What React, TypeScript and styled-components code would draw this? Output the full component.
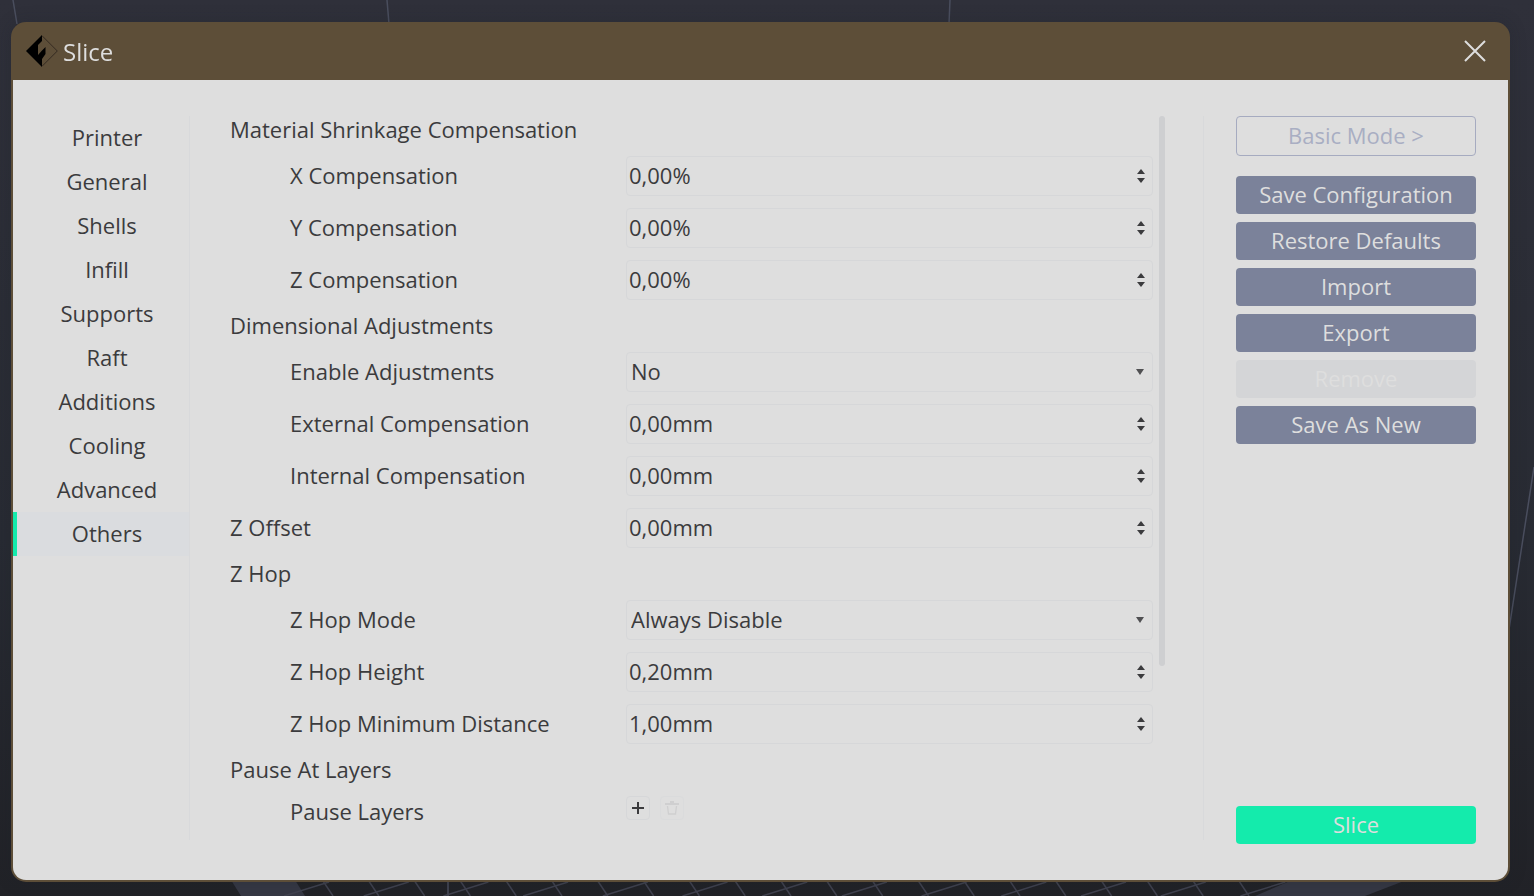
import React from 'react';
import styled, { createGlobalStyle, css } from 'styled-components';

const GlobalStyle = createGlobalStyle`
  *, *::before, *::after { box-sizing: border-box; }
  body {
    margin: 0;
    background: #24262d;
    color: #3b3b3d;
    font-family: 'Open Sans', 'Noto Sans', sans-serif;
    font-size: 22px;
    line-height: 26px;
  }
  button, input, select { font: inherit; color: inherit; }
`;

const Viewport = styled.div`
  min-height: 100vh;
  display: flex;
  padding: 22px 24px 14px 11px;
  background: linear-gradient(#2f303a, #282b33 60%, #212227);
`;

const Plate = styled.svg`
  position: fixed;
  inset: 0;
  width: 100%;
  height: 100%;
`;

const Dialog = styled.main`
  position: relative;
  flex: 1;
  min-width: 0;
  display: flex;
  flex-direction: column;
  padding: 0 2px 2px;
  border-radius: 15px;
  background: #5d4e38;
  box-shadow: 0 0 16px #1c1e2640;
`;

const TitleBar = styled.header`
  height: 58px;
  flex: none;
  display: flex;
  align-items: center;
  gap: 5px;
  padding: 0 20px 0 13px;
  color: #dedede;
`;

const Title = styled.h1`
  flex: 1;
  margin: 0;
  padding-top: 2px;
  font-size: 24px;
  font-weight: 400;
`;

const CloseButton = styled.button`
  display: flex;
  padding: 0;
  border: 0;
  background: none;
`;

const Body = styled.div`
  flex: 1;
  display: flex;
  padding: 36px 32px 40px 0;
  border-radius: 0 0 13px 13px;
  background: #dedede;
`;

const Nav = styled.nav`
  width: 177px;
  flex: none;
  display: flex;
  flex-direction: column;
  border-right: 1px solid #d8d9db;
`;

const NavLink = styled.a<{ $active: boolean }>`
  height: 44px;
  display: flex;
  align-items: center;
  justify-content: center;
  padding: 0 0 2px 8px;
  border-left: 4px solid transparent;
  color: inherit;
  text-decoration: none;
  ${({ $active }) => $active && css`
    border-left-color: #14ebac;
    background: #dadcdf;
  `}
`;

const Settings = styled.form`
  flex: 1;
  min-width: 0;
  display: flex;
  flex-direction: column;
  gap: 12px;
  padding-left: 40px;
`;

const GroupTitle = styled.h2`
  margin: 0;
  padding-bottom: 2px;
  font-size: inherit;
  font-weight: 400;
`;

const Row = styled.div`
  display: flex;
  align-items: center;
`;

const RowLabel = styled.label<{ $nested?: boolean }>`
  width: 396px;
  flex: none;
  padding-bottom: 2px;
  padding-left: ${({ $nested }) => ($nested ? 60 : 0)}px;
`;

const Field = styled.div`
  flex: 1;
  min-width: 0;
  height: 40px;
  display: grid;
  grid-template-columns: 1fr 22px;
  align-items: center;
  border: 1px solid #d6d7d9;
  border-radius: 4px;
`;

const ValueInput = styled.input`
  min-width: 0;
  width: 100%;
  padding: 0 2px 2px;
  border: 0;
  background: none;
  outline: none;
`;

const Stepper = styled.div`
  display: flex;
  flex-direction: column;
  align-items: center;
  gap: 4px;
`;

const StepButton = styled.button`
  display: flex;
  padding: 0;
  border: 0;
  background: none;
`;

const ValueSelect = styled.select`
  grid-area: 1 / 1 / 2 / 3;
  width: 100%;
  height: 100%;
  padding: 0 4px 2px;
  border: 0;
  background: none;
  line-height: 32px;
  appearance: none;
  outline: none;
`;

const SelectArrow = styled.svg`
  grid-area: 1 / 2 / 2 / 3;
  margin-left: 6px;
  pointer-events: none;
`;

const LayerRow = styled(Row)`
  height: 32px;
`;

const LayerTools = styled.div`
  align-self: flex-start;
  display: flex;
  gap: 10px;
`;

const ToolButton = styled.button`
  width: 24px;
  height: 24px;
  display: flex;
  align-items: center;
  justify-content: center;
  padding: 0;
  border: 1px solid #d6d7d9;
  border-radius: 4px;
  background: none;
  &:disabled { color: #cfcfd0; border-color: #dadbdc; }
`;

const ScrollTrack = styled.div`
  width: 51px;
  flex: none;
  padding-left: 6px;
  border-right: 1px solid #d8d9db;
`;

const ScrollThumb = styled.div`
  width: 6px;
  height: 76%;
  border-radius: 3px;
  background: #cecfd1;
`;

const Actions = styled.aside`
  width: 272px;
  flex: none;
  display: flex;
  flex-direction: column;
  gap: 8px;
  padding-left: 32px;
  margin-bottom: -4px;
`;

const ActionButton = styled.button<{ $accent?: boolean }>`
  height: 38px;
  padding: 0 0 2px;
  border: 0;
  border-radius: 4px;
  background: ${({ $accent }) => ($accent ? '#14ebac' : '#7b829a')};
  color: #dedede;
  ${({ $accent }) => $accent && css`margin-top: auto;`}
  &:disabled { background: #d4d5d7; color: #dedede; }
`;

const ModeButton = styled(ActionButton)`
  height: 40px;
  margin-bottom: 12px;
  border: 1px solid #a6abc0;
  background: none;
  color: #a9aec3;
`;

const pages = ['Printer', 'General', 'Shells', 'Infill', 'Supports', 'Raft', 'Additions', 'Cooling', 'Advanced', 'Others'];

type RowProps = { label: string; value: string; nested?: boolean };

const toId = (label: string) => label.toLowerCase().replace(/ /g, '-');

function NumberRow({ label, value, nested }: RowProps) {
  const id = toId(label);
  return (
    <Row>
      <RowLabel htmlFor={id} $nested={nested}>{label}</RowLabel>
      <Field>
        <ValueInput id={id} type="text" defaultValue={value} />
        <Stepper>
          <StepButton type="button" aria-label={`Increase ${label}`}>
            <svg width="8" height="5" viewBox="0 0 8 5"><path d="M4 0 8 5H0Z" fill="#3b3b3d" /></svg>
          </StepButton>
          <StepButton type="button" aria-label={`Decrease ${label}`}>
            <svg width="8" height="5" viewBox="0 0 8 5"><path d="M0 0H8L4 5Z" fill="#3b3b3d" /></svg>
          </StepButton>
        </Stepper>
      </Field>
    </Row>
  );
}

function SelectRow({ label, value, nested }: RowProps) {
  const id = toId(label);
  return (
    <Row>
      <RowLabel htmlFor={id} $nested={nested}>{label}</RowLabel>
      <Field>
        <ValueSelect id={id} defaultValue={value}>
          <option>{value}</option>
        </ValueSelect>
        <SelectArrow width="8" height="6" viewBox="0 0 8 6"><path d="M0 0H8L4 6Z" fill="#505052" /></SelectArrow>
      </Field>
    </Row>
  );
}

const gridDown = Array.from({ length: 21 }, (_, i) => 323 + i * 45.8);
const gridUp = Array.from({ length: 13 }, (_, i) => 329 + i * 79.7);

export default function App() {
  return (
    <Viewport>
      <GlobalStyle />
      <Plate viewBox="0 0 1534 896" preserveAspectRatio="none" aria-hidden="true" fill="none" stroke="#40424f" strokeWidth="1.5">
        <path d="M13 0 17 24M387 0 389 24M950 0 949 24M1534 467 1508 636M448 880V896" stroke="#4a4e5e" />
        <path d="M231 880H295L305 896H241Z" fill="#363844" stroke="none" />
        {gridDown.map((x) => <path key={x} d={`M${x} 881 ${x + 10} 896`} />)}
        {gridUp.map((x) => <path key={x} d={`M${x} 882 ${x - 45} 896`} />)}
        <path d="M1290 881H1404L1365 896H1255Z" fill="#363844" stroke="none" />
      </Plate>
      <Dialog>
        <TitleBar>
          <svg width="32" height="32" viewBox="0 0 32 32" aria-hidden="true">
            <path d="M16 .7 31.3 16 16 31.3" fill="none" stroke="#352b22" strokeWidth="1" />
            <path d="M16 0V6L12 10V20L16 15.500 19.500 12V19L16 24V32L0 16Z" fill="#000" />
          </svg>
          <Title>Slice</Title>
          <CloseButton type="button" aria-label="Close">
            <svg width="26" height="26" viewBox="0 0 26 26"><path d="M3 3 23 23M23 3 3 23" stroke="#dedede" strokeWidth="2" /></svg>
          </CloseButton>
        </TitleBar>
        <Body>
          <Nav>
            {pages.map((page) => (
              <NavLink key={page} href={`#${page.toLowerCase()}`} $active={page === 'Others'}>{page}</NavLink>
            ))}
          </Nav>
          <Settings>
            <GroupTitle>Material Shrinkage Compensation</GroupTitle>
            <NumberRow nested label="X Compensation" value="0,00%" />
            <NumberRow nested label="Y Compensation" value="0,00%" />
            <NumberRow nested label="Z Compensation" value="0,00%" />
            <GroupTitle>Dimensional Adjustments</GroupTitle>
            <SelectRow nested label="Enable Adjustments" value="No" />
            <NumberRow nested label="External Compensation" value="0,00mm" />
            <NumberRow nested label="Internal Compensation" value="0,00mm" />
            <NumberRow label="Z Offset" value="0,00mm" />
            <GroupTitle>Z Hop</GroupTitle>
            <SelectRow nested label="Z Hop Mode" value="Always Disable" />
            <NumberRow nested label="Z Hop Height" value="0,20mm" />
            <NumberRow nested label="Z Hop Minimum Distance" value="1,00mm" />
            <GroupTitle>Pause At Layers</GroupTitle>
            <LayerRow>
              <RowLabel as="span" $nested>Pause Layers</RowLabel>
              <LayerTools>
                <ToolButton type="button" aria-label="Add pause layer">
                  <svg width="12" height="12" viewBox="0 0 12 12"><path d="M6 0V12M0 6H12" stroke="currentColor" strokeWidth="2" /></svg>
                </ToolButton>
                <ToolButton type="button" aria-label="Delete pause layer" disabled>
                  <svg width="14" height="14" viewBox="0 0 14 14" fill="none" stroke="currentColor"><path d="M0 3H14M5 1H9" strokeWidth="2" /><path d="M2.500 5 3.500 13H10.500L11.500 5" strokeWidth="1.300" /></svg>
                </ToolButton>
              </LayerTools>
            </LayerRow>
          </Settings>
          <ScrollTrack><ScrollThumb /></ScrollTrack>
          <Actions>
            <ModeButton type="button">Basic Mode &gt;</ModeButton>
            <ActionButton type="button">Save Configuration</ActionButton>
            <ActionButton type="button">Restore Defaults</ActionButton>
            <ActionButton type="button">Import</ActionButton>
            <ActionButton type="button">Export</ActionButton>
            <ActionButton type="button" disabled>Remove</ActionButton>
            <ActionButton type="button">Save As New</ActionButton>
            <ActionButton type="button" $accent>Slice</ActionButton>
          </Actions>
        </Body>
      </Dialog>
    </Viewport>
  );
}
